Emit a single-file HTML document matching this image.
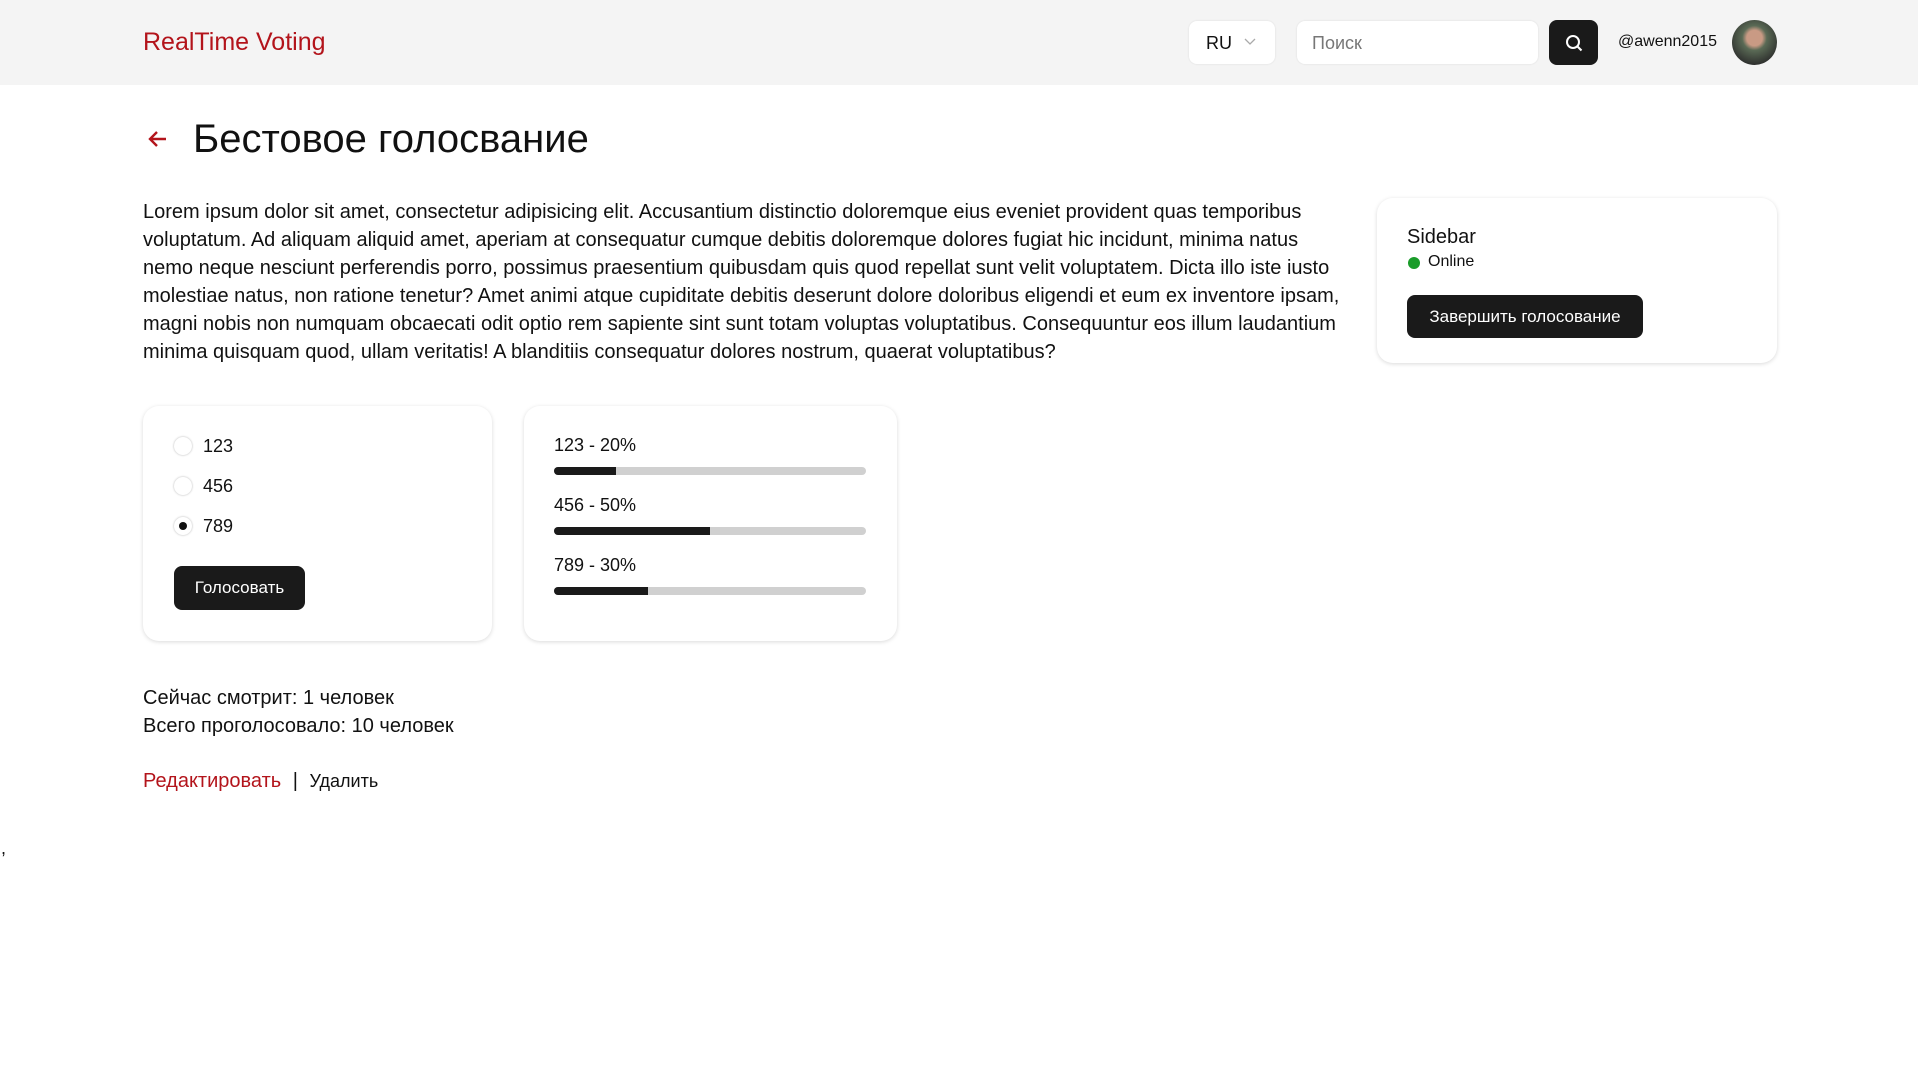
<!DOCTYPE html>
<html><head><meta charset="utf-8"><style>
*{box-sizing:border-box;margin:0;padding:0}
body{width:1918px;height:1078px;background:#fff;font-family:"Liberation Sans","Noto Sans CJK SC",sans-serif;color:#111;position:relative;overflow:hidden}
.a{position:absolute}
header{position:absolute;left:0;top:0;width:1918px;height:85px;background:#f4f4f4}
.card{position:absolute;background:#fff;border-radius:16px;box-shadow:0 1px 4px rgba(0,0,0,.15)}
.btn{position:absolute;background:#1a1a1a;color:#fff;border-radius:8px;font-size:17px;display:flex;align-items:center;justify-content:center}
.bar{position:absolute;left:554px;width:312px;height:8px;border-radius:4px;background:#d0d0d0;overflow:hidden}
.bar i{display:block;height:100%;background:#1a1a1a}
.rad{position:absolute;left:174px;width:18px;height:18px;border-radius:50%;background:#fff;box-shadow:0 0 2px rgba(0,0,0,.3)}
.lbl{position:absolute;font-size:18px}
</style></head><body>
<header>
<div class="a" style="left:143px;top:28px;font-size:25px;color:#b3141b">RealTime Voting</div>
<div class="a" style="left:1189px;top:21px;width:86px;height:43px;background:#fff;border-radius:8px;box-shadow:0 0 2px rgba(0,0,0,.1)"><span class="a" style="left:17px;top:12px;font-size:18px">RU</span><svg class="a" style="left:55px;top:17px" width="12" height="8" viewBox="0 0 12 8"><path d="M1 1l5 5 5-5" fill="none" stroke="#aaa" stroke-width="1.3"/></svg></div>
<div class="a" style="left:1297px;top:21px;width:241px;height:43px;background:#fff;border-radius:8px;box-shadow:0 0 2px rgba(0,0,0,.1)"><span class="a" style="left:15px;top:12px;font-size:18px;color:#777">Поиск</span></div>
<div class="btn" style="left:1549px;top:20px;width:49px;height:45px"><svg width="18" height="18" viewBox="0 0 18 18"><circle cx="8" cy="8" r="6" fill="none" stroke="#fff" stroke-width="2"/><path d="M12.5 12.5l4 4" stroke="#fff" stroke-width="2"/></svg></div>
<div class="a" style="left:1618px;top:33px;font-size:16px">@awenn2015</div>
<div class="a" style="left:1732px;top:20px;width:45px;height:45px;border-radius:50%;background:radial-gradient(circle at 50% 40%,#c99a84 0 22%,#5a6a55 35%,#2a2a2a 80%)"></div>
</header>
<svg class="a" style="left:146px;top:127px" width="24" height="24" viewBox="0 0 24 24"><path d="M20 12H4M11 5l-7 7 7 7" fill="none" stroke="#b3141b" stroke-width="2.4"/></svg>
<div class="a" style="left:193px;top:117px;font-size:40px">Бестовое голосвание</div>
<div class="a" style="left:143px;top:198px;width:1203px;font-size:20px;line-height:28px">Lorem ipsum dolor sit amet, consectetur adipisicing elit. Accusantium distinctio doloremque eius eveniet provident quas temporibus voluptatum. Ad aliquam aliquid amet, aperiam at consequatur cumque debitis doloremque dolores fugiat hic incidunt, minima natus nemo neque nesciunt perferendis porro, possimus praesentium quibusdam quis quod repellat sunt velit voluptatem. Dicta illo iste iusto molestiae natus, non ratione tenetur? Amet animi atque cupiditate debitis deserunt dolore doloribus eligendi et eum ex inventore ipsam, magni nobis non numquam obcaecati odit optio rem sapiente sint sunt totam voluptas voluptatibus. Consequuntur eos illum laudantium minima quisquam quod, ullam veritatis! A blanditiis consequatur dolores nostrum, quaerat voluptatibus?</div>
<div class="card" style="left:1377px;top:198px;width:400px;height:165px">
<div class="a" style="left:30px;top:28px;font-size:20px">Sidebar</div>
<div class="a" style="left:31px;top:59px;width:12px;height:12px;border-radius:50%;background:#1a9c2a"></div>
<div class="a" style="left:51px;top:55px;font-size:16px">Online</div>
</div>
<div class="btn" style="left:1407px;top:295px;width:236px;height:43px">Завершить голосование</div>
<div class="card" style="left:143px;top:406px;width:349px;height:235px"></div>
<div class="rad" style="top:437px"></div><div class="lbl" style="left:203px;top:436px">123</div>
<div class="rad" style="top:477px"></div><div class="lbl" style="left:203px;top:476px">456</div>
<div class="rad" style="top:517px"><i style="position:absolute;left:5px;top:5px;width:8px;height:8px;border-radius:50%;background:#111"></i></div><div class="lbl" style="left:203px;top:516px">789</div>
<div class="btn" style="left:174px;top:566px;width:131px;height:44px">Голосовать</div>
<div class="card" style="left:524px;top:406px;width:373px;height:235px"></div>
<div class="lbl" style="left:554px;top:435px">123 - 20%</div><div class="bar" style="top:467px"><i style="width:20%"></i></div>
<div class="lbl" style="left:554px;top:495px">456 - 50%</div><div class="bar" style="top:527px"><i style="width:50%"></i></div>
<div class="lbl" style="left:554px;top:555px">789 - 30%</div><div class="bar" style="top:587px"><i style="width:30%"></i></div>
<div class="a" style="left:143px;top:684px;font-size:20px;line-height:28px">Сейчас смотрит: 1 человек<br>Всего проголосовало: 10 человек</div>
<div class="a" style="left:143px;top:770px;font-size:20px"><span style="color:#b3141b">Редактировать</span> <span style="margin:0 6px">|</span> <span style="font-size:18px">Удалить</span></div>
<div class="a" style="left:1px;top:838px;font-size:18px">,</div>
</body></html>
